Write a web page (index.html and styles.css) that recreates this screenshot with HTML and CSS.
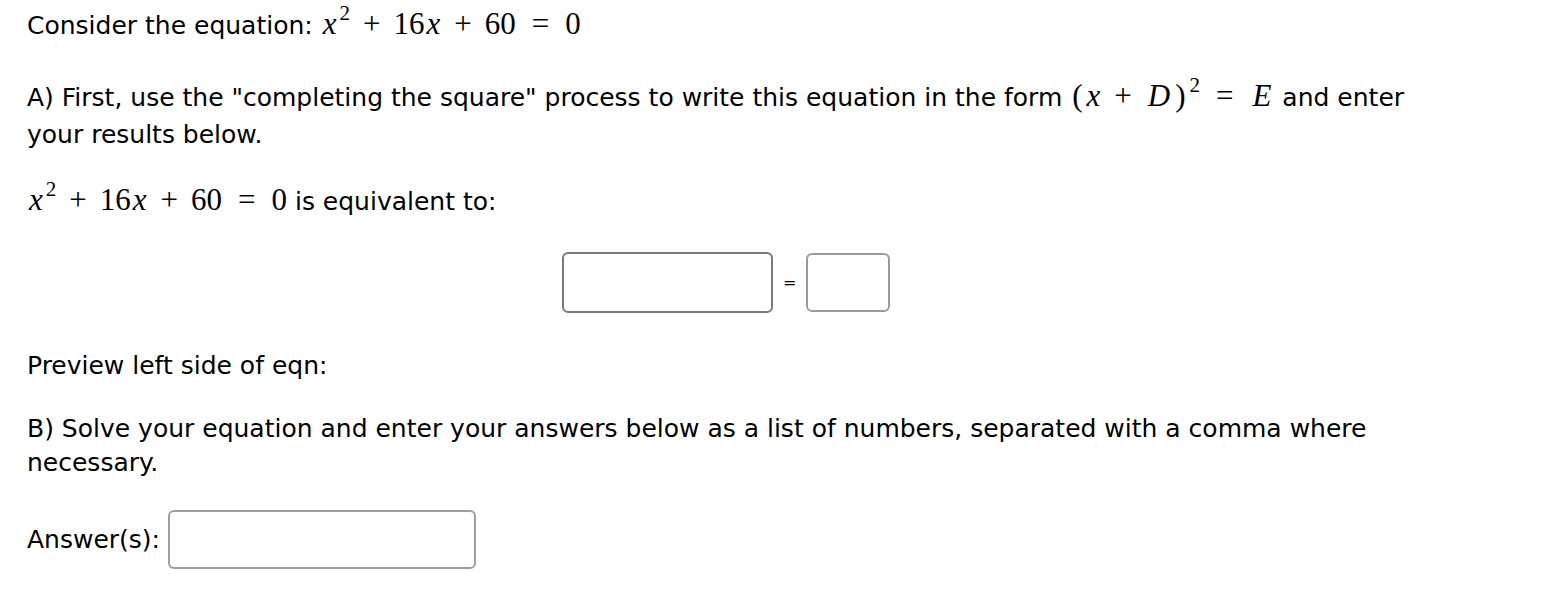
FILE: index.html
```html
<!DOCTYPE html>
<html lang="en">
<head>
    <meta charset="UTF-8">
    <title>Completing the square</title>
    <link rel="stylesheet" href="styles.css">
</head>
<body>
    <div class="problem">
        <p class="intro">Consider the equation: <span class="math"><i>x</i><sup>2</sup><span class="op">+</span>16<i>x</i><span class="op">+</span>60<span class="rel">=</span>0</span></p>

        <p class="part part-a">A) First, use the "completing the square" process to write this equation in the form <span class="math"><span class="paren">(</span><i>x</i><span class="op">+</span><i class="cap">D</i><span class="paren">)</span><sup>2</sup><span class="rel">=</span><i class="cap">E</i></span> and enter your results below.</p>

        <p class="equiv"><span class="math"><i>x</i><sup>2</sup><span class="op">+</span>16<i>x</i><span class="op">+</span>60<span class="rel">=</span>0</span> is equivalent to:</p>

        <div class="eqn-row">
            <input class="box box-left" type="text">
            <span class="eq-sign">=</span>
            <input class="box box-right" type="text">
        </div>

        <p class="preview">Preview left side of eqn:</p>

        <p class="part part-b">B) Solve your equation and enter your answers below as a list of numbers, separated with a comma where necessary.</p>

        <div class="answer-row">
            <label class="answer-label">Answer(s):</label>
            <input class="box box-answer" type="text">
        </div>
    </div>
</body>
</html>
```

FILE: styles.css
```css
* {
    margin: 0;
    padding: 0;
    box-sizing: border-box;
}

body {
    font-family: 'DejaVu Sans', Verdana, sans-serif;
    font-size: 25px;
    color: #000;
    background: #fff;
}

.problem {
    padding: 6px 27px;
    width: 1434px;
}

p {
    line-height: 36px;
}

.math {
    font-family: 'Liberation Serif', 'Times New Roman', serif;
    font-size: 31px;
    white-space: nowrap;
}

.math i {
    padding: 0 1px 0 2px;
}

.math i.cap {
    padding: 0 3px;
}

.paren {
    padding: 0 2px;
}

.math sup {
    font-size: 21px;
    line-height: 0;
    vertical-align: 14px;
    margin-left: 2px;
}

.op {
    margin: 0 13px;
}

.rel {
    margin: 0 16px;
}

.intro {
    margin-bottom: 33px;
}

.part-a {
    line-height: 37px;
    margin-bottom: 29px;
}

.eqn-row {
    display: flex;
    align-items: center;
    margin: 32px 0 0 535px;
    height: 61px;
}

.box {
    border: 2px solid #7a7a7a;
    border-radius: 6px;
    background: #fff;
    height: 61px;
}

.box-left {
    width: 211px;
}

.eq-sign {
    font-size: 16px;
    margin: 0 10px;
}

.box-right {
    width: 84px;
    height: 59px;
    border-color: #9a9a9a;
}

.preview {
    margin-top: 35px;
    margin-bottom: 28px;
}

.part-b {
    line-height: 34px;
    margin-bottom: 30px;
}

.answer-row {
    display: flex;
    align-items: center;
    gap: 8px;
}

.box-answer {
    width: 308px;
    height: 59px;
    border-color: #9e9e9e;
}
```
